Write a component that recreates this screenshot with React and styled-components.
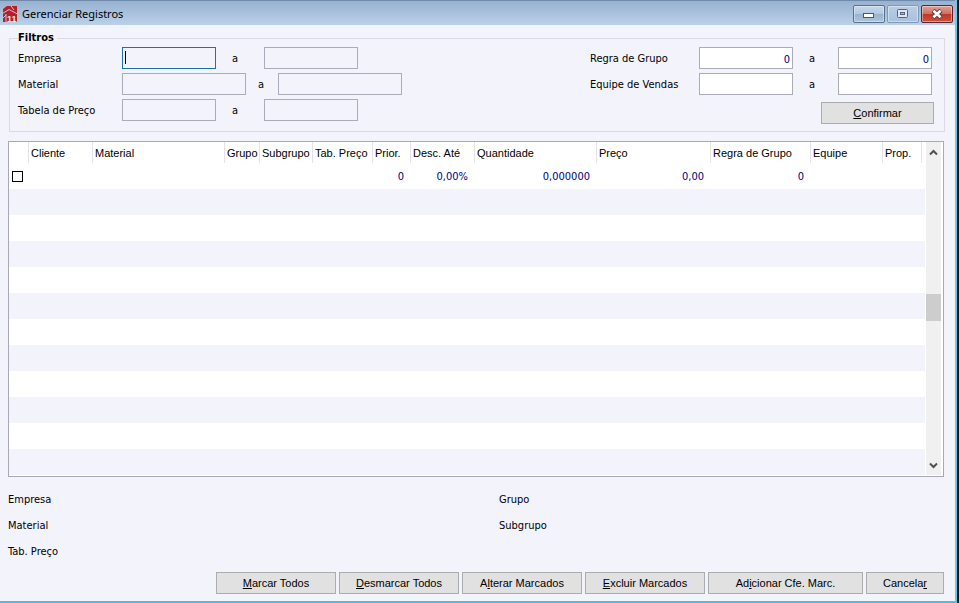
import { useState } from 'react';
import styled, { createGlobalStyle } from 'styled-components';

const GlobalStyle = createGlobalStyle`
  * {
    box-sizing: border-box;
  }
  body {
    margin: 0;
    background: #0a1626;
    color: #000;
    font-family: 'DejaVu Sans Condensed', 'DejaVu Sans', sans-serif;
    font-size: 11px;
  }
`;

const Window = styled.div`
  display: flex;
  flex-direction: column;
  min-height: 100vh;
  margin-right: 2px;
  background: #f2f3fb;
  border-right: 2px solid #6cc9e2;
  border-bottom: 2px solid #45c4e0;
`;

const TitleBar = styled.header`
  display: flex;
  align-items: center;
  height: 25px;
  padding: 2px 2px 0 2px;
  background: linear-gradient(#97b1cf, #bad1ea);
  border-top: 1px solid #6f8bab;
`;

const Title = styled.h1`
  flex: 1;
  margin: 0 0 0 4px;
  font-family: 'Noto Sans', sans-serif;
  font-size: 11px;
  font-weight: 400;
  line-height: 20px;
`;

const WindowButtons = styled.div`
  display: flex;
  gap: 2px;
`;

const WindowButton = styled.button`
  display: flex;
  align-items: center;
  justify-content: center;
  width: 32px;
  height: 18px;
  padding: 0;
  border: 1px solid ${({ $kind }) => ($kind === 'close' ? '#5b2430' : $kind === 'max' ? '#8299b5' : '#58708e')};
  border-radius: 2px;
  box-shadow: inset 0 0 0 1px rgba(255, 255, 255, 0.4);
  background: ${({ $kind }) =>
    $kind === 'close'
      ? 'linear-gradient(#e0a196 0%, #d0705f 48%, #bd3a26 52%, #c9543f 100%)'
      : $kind === 'max'
      ? 'linear-gradient(#b9cee5 0%, #a9c1dc 100%)'
      : 'linear-gradient(#c5d7ea 0%, #b4c9e0 48%, #98b3d0 52%, #adc6e0 100%)'};
`;

const Content = styled.main`
  display: flex;
  flex: 1;
  flex-direction: column;
  padding: 6px 11px 7px 8px;
`;

const Filters = styled.fieldset`
  display: flex;
  justify-content: space-between;
  min-width: 0;
  margin: 0 -1px 0 1px;
  padding: 2px 10px 7px 8px;
  border: 1px solid #d9dae6;
`;

const Legend = styled.legend`
  padding: 0 3px 0 0;
  font-weight: 700;
  line-height: 14px;
`;

const FilterColumn = styled.div`
  display: flex;
  flex-direction: column;
  gap: 4px;
`;

const FilterRow = styled.div`
  display: flex;
  align-items: center;
  padding-right: ${({ $inset }) => ($inset ? 2 : 0)}px;
`;

const FilterLabel = styled.label`
  width: ${({ $width }) => $width}px;
`;

const Between = styled.span`
  width: ${({ $width }) => $width}px;
  padding-left: ${({ $width }) => ($width > 40 ? 16 : 12)}px;
`;

const Field = styled.input`
  width: ${({ $long }) => ($long ? 124 : 94)}px;
  height: 22px;
  padding: 2px 2px 0 2px;
  border: 1px solid #abacb9;
  border-radius: 0;
  outline: none;
  background: ${({ $filled }) => ($filled ? '#fff' : '#f2f3fb')};
  color: #00007c;
  font: inherit;
  text-align: ${({ $number }) => ($number ? 'right' : 'left')};
`;

const ActiveField = styled(Field)`
  border-color: #1a72ad;
  background: linear-gradient(#000, #000) 2px 3px / 1px 13px no-repeat #f2f3fb;
`;

const Button = styled.button`
  width: ${({ $width }) => $width}px;
  height: 22px;
  padding: 0;
  border: 1px solid #abacb0;
  border-radius: 0;
  background: #e1e1e1;
  color: #000;
  font-family: 'Liberation Sans', Arial, sans-serif;
  font-size: 11px;
  line-height: 20px;
`;

const ConfirmButton = styled(Button)`
  align-self: flex-end;
  margin-top: 3px;
`;

const GridPanel = styled.section`
  display: flex;
  margin-top: 9px;
  padding-bottom: 1px;
  border: 1px solid #a8a9b4;
  background: #fff;
`;

const Table = styled.table`
  flex: 1;
  width: 100%;
  table-layout: fixed;
  border-collapse: separate;
  border-spacing: 0;
`;

const HeadCell = styled.th`
  height: 21px;
  padding: 1px 0 0 2px;
  border-right: 1px solid ${({ $last }) => ($last ? 'transparent' : '#e3e3e9')};
  font-family: 'Liberation Sans', Arial, sans-serif;
  font-size: 11px;
  font-weight: 400;
  line-height: 20px;
  text-align: left;
  white-space: nowrap;
`;

const Row = styled.tr`
  height: 26px;
  &:nth-child(even) {
    background: #f2f3fb;
  }
`;

const Cell = styled.td`
  padding: 0 7px 0 3px;
  color: #00007c;
  text-align: right;
  white-space: nowrap;
`;

const Check = styled.input`
  display: block;
  width: 11px;
  height: 11px;
  margin: 0;
  appearance: none;
  border: 1px solid #000;
  background: #fff;
  &:checked {
    box-shadow: inset 0 0 0 2px #fff;
    background: #000;
  }
`;

const ScrollBar = styled.div`
  display: flex;
  flex-direction: column;
  width: 15px;
  margin: 0 2px 0 1px;
  background: #f0f0f0;
`;

const ScrollButton = styled.button`
  display: flex;
  align-items: center;
  justify-content: center;
  height: 20px;
  padding: 0;
  border: 0;
  background: none;
`;

const Track = styled.div`
  display: flex;
  flex: 1;
  flex-direction: column;
`;

const TrackSpace = styled.div`
  flex: ${({ $part }) => $part};
`;

const Thumb = styled.div`
  height: 27px;
  background: #cdcdcd;
`;

const Details = styled.section`
  display: grid;
  grid-template-columns: 491fr 445fr;
  margin-top: 10px;
  line-height: 26px;
`;

const Actions = styled.footer`
  display: flex;
  justify-content: flex-end;
  gap: 3px;
  margin-top: auto;
`;

const Logo = () => (
  <svg width="16" height="17" viewBox="0 0 16 17" aria-hidden="true">
    <path d="M1 3L5 0H15V16H1Z" fill="#b31f2a" />
    <path d="M0.5 7.5L7 3.5L15.5 8" fill="none" stroke="#d9bcc8" strokeWidth="1" />
    <path d="M9 0L12 4M4 8V16.5M1 12L4 9" fill="none" stroke="#d9bcc8" strokeWidth="1" />
    <text x="5" y="16" fill="#f6e8ee" fontFamily="Liberation Sans, sans-serif" fontSize="9" fontWeight="700">11</text>
  </svg>
);

const MinimizeIcon = () => (
  <svg width="14" height="10" viewBox="0 0 14 10">
    <rect x="1.5" y="4.5" width="10" height="4" fill="#fff" stroke="#4e5564" />
  </svg>
);

const MaximizeIcon = () => (
  <svg width="12" height="10" viewBox="0 0 12 10">
    <rect x="0.5" y="0.5" width="10" height="8" rx="1" fill="#dfe8f2" stroke="#566377" />
    <rect x="3.5" y="3.5" width="4" height="2" fill="#a9c1dc" stroke="#566377" />
  </svg>
);

const CloseIcon = () => (
  <svg width="14" height="12" viewBox="0 0 14 12">
    <path d="M3 2.5L11 9.5M11 2.5L3 9.5" stroke="#5a3a45" strokeWidth="4.5" />
    <path d="M3.4 2.8L10.6 9.2M10.6 2.8L3.4 9.2" stroke="#fff" strokeWidth="2.6" />
  </svg>
);

const Chevron = ({ down }) => (
  <svg width="9" height="7" viewBox="0 0 9 7">
    <path d={down ? 'M1 1.5L4.5 5L8 1.5' : 'M1 5.5L4.5 2L8 5.5'} fill="none" stroke="#505050" strokeWidth="2" />
  </svg>
);

const columns = [
  { title: '', width: 20 },
  { title: 'Cliente', width: 64 },
  { title: 'Material', width: 132 },
  { title: 'Grupo', width: 35 },
  { title: 'Subgrupo', width: 53 },
  { title: 'Tab. Preço', width: 60 },
  { title: 'Prior.', width: 38, value: '0' },
  { title: 'Desc. Até', width: 64, value: '0,00%' },
  { title: 'Quantidade', width: 122, value: '0,000000' },
  { title: 'Preço', width: 114, value: '0,00' },
  { title: 'Regra de Grupo', width: 100, value: '0' },
  { title: 'Equipe', width: 72 },
  { title: 'Prop.', width: 39 },
];

const Col = styled.col`
  width: ${({ $width }) => $width}px;
`;

const emptyRows = Array.from({ length: 11 }, (_, i) => i);

const App = () => {
  const [marked, setMarked] = useState(false);

  return (
    <>
      <GlobalStyle />
      <Window>
        <TitleBar>
          <Logo />
          <Title>Gerenciar Registros</Title>
          <WindowButtons>
            <WindowButton type="button" aria-label="Minimizar"><MinimizeIcon /></WindowButton>
            <WindowButton type="button" aria-label="Maximizar" $kind="max"><MaximizeIcon /></WindowButton>
            <WindowButton type="button" aria-label="Fechar" $kind="close"><CloseIcon /></WindowButton>
          </WindowButtons>
        </TitleBar>
        <Content>
          <Filters>
            <Legend>Filtros</Legend>
            <FilterColumn>
              <FilterRow>
                <FilterLabel htmlFor="empresa" $width={104}>Empresa</FilterLabel>
                <ActiveField id="empresa" />
                <Between $width={48}>a</Between>
                <Field aria-label="Empresa final" />
              </FilterRow>
              <FilterRow>
                <FilterLabel htmlFor="material" $width={104}>Material</FilterLabel>
                <Field id="material" $long />
                <Between $width={32}>a</Between>
                <Field aria-label="Material final" $long />
              </FilterRow>
              <FilterRow>
                <FilterLabel htmlFor="tabela" $width={104}>Tabela de Preço</FilterLabel>
                <Field id="tabela" />
                <Between $width={48}>a</Between>
                <Field aria-label="Tabela de Preço final" />
              </FilterRow>
            </FilterColumn>
            <FilterColumn>
              <FilterRow $inset>
                <FilterLabel htmlFor="regra" $width={109}>Regra de Grupo</FilterLabel>
                <Field id="regra" defaultValue="0" $filled $number />
                <Between $width={45}>a</Between>
                <Field aria-label="Regra de Grupo final" defaultValue="0" $filled $number />
              </FilterRow>
              <FilterRow $inset>
                <FilterLabel htmlFor="equipe" $width={109}>Equipe de Vendas</FilterLabel>
                <Field id="equipe" $filled />
                <Between $width={45}>a</Between>
                <Field aria-label="Equipe de Vendas final" $filled />
              </FilterRow>
              <ConfirmButton type="button" $width={113}><u>C</u>onfirmar</ConfirmButton>
            </FilterColumn>
          </Filters>

          <GridPanel>
            <Table>
              <colgroup>
                {columns.map((c) => <Col key={c.title} $width={c.width} />)}
                <col />
              </colgroup>
              <thead>
                <tr>
                  {columns.map((c) => <HeadCell key={c.title}>{c.title}</HeadCell>)}
                  <HeadCell $last />
                </tr>
              </thead>
              <tbody>
                <Row>
                  <Cell>
                    <Check
                      type="checkbox"
                      aria-label="Marcar registro"
                      checked={marked}
                      onChange={(e) => setMarked(e.target.checked)}
                    />
                  </Cell>
                  {columns.slice(1).map((c) => <Cell key={c.title}>{c.value}</Cell>)}
                  <Cell />
                </Row>
                {emptyRows.map((n) => (
                  <Row key={n}>
                    <Cell colSpan={columns.length + 1} />
                  </Row>
                ))}
              </tbody>
            </Table>
            <ScrollBar>
              <ScrollButton type="button" aria-label="Rolar para cima"><Chevron /></ScrollButton>
              <Track>
                <TrackSpace $part={132} />
                <Thumb />
                <TrackSpace $part={134} />
              </Track>
              <ScrollButton type="button" aria-label="Rolar para baixo"><Chevron down /></ScrollButton>
            </ScrollBar>
          </GridPanel>

          <Details>
            <span>Empresa</span>
            <span>Grupo</span>
            <span>Material</span>
            <span>Subgrupo</span>
            <span>Tab. Preço</span>
          </Details>

          <Actions>
            <Button type="button" $width={120} onClick={() => setMarked(true)}><u>M</u>arcar Todos</Button>
            <Button type="button" $width={120} onClick={() => setMarked(false)}><u>D</u>esmarcar Todos</Button>
            <Button type="button" $width={120}>A<u>l</u>terar Marcados</Button>
            <Button type="button" $width={120}><u>E</u>xcluir Marcados</Button>
            <Button type="button" $width={155}>Ad<u>i</u>cionar Cfe. Marc.</Button>
            <Button type="button" $width={78}>Cancela<u>r</u></Button>
          </Actions>
        </Content>
      </Window>
    </>
  );
};

export default App;
